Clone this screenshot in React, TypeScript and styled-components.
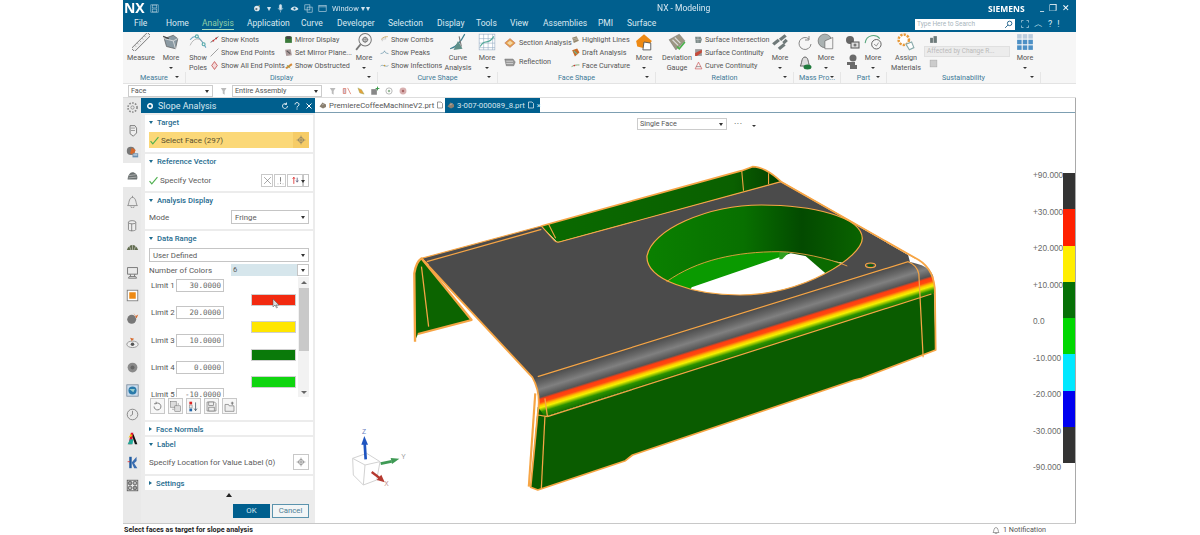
import React from 'react';
import styled, { createGlobalStyle } from 'styled-components';

const Global = createGlobalStyle`
  html, body { margin: 0; padding: 0; background: #fff; }
  body { width: 1200px; height: 535px; overflow: hidden; font-family: Roboto, "Noto Sans", sans-serif; }
  * { box-sizing: border-box; }
`;

const BLUE = '#005f8e';

const Shell = styled.div`
  width: 953px; height: 535px; margin-left: 123px; display: flex; flex-direction: column;
  background: #fff; filter: blur(0.3px); color: #555;
`;
const TitleBar = styled.div`
  height: 16px; background: ${BLUE}; display: flex; align-items: center; color: #fff; position: relative; padding-left: 1px;
`;
const Logo = styled.span`font: 700 14px/16px "Open Sans", sans-serif; width: 26px; letter-spacing: -0.2px;`;
const Quick = styled.div`display: flex; align-items: center; gap: 5px; width: 498px; padding-left: 94px; font-size: 7.5px; color: #cfe3ee;`;
const AppTitle = styled.span`font-size: 8.5px; color: #d7e8f1; width: 331px;`;
const Brand = styled.span`font: 700 8.5px "Open Sans", sans-serif; letter-spacing: 0; width: 52px;`;
const WinControls = styled.div`display: flex; gap: 5px; align-items: center; font-size: 9px; color: #fff;`;

const MenuBar = styled.div`
  height: 16px; background: ${BLUE}; display: flex; align-items: center; padding-left: 11px; color: #dbe9f1; font-size: 8.5px;
`;
const MenuItem = styled.span<{ $active?: boolean; $w: number }>`
  width: ${p => p.$w}px; flex: none; height: 16px; line-height: 15px;
  span { display: inline-block; height: 14px; ${p => p.$active ? 'color:#8fd0a8; border-bottom: 1px solid #a8dcc0;' : ''} }
`;
const Search = styled.div`
  margin-left: 250px; width: 100px; height: 11px; background: #fff; color: #a9b6bd; font-size: 6.5px; line-height: 11px; padding: 0 2px;
  display: flex; justify-content: space-between; align-items: center;
`;
const HelpIcons = styled.div`display: flex; gap: 5px; margin-left: 6px; align-items: center; color: #d9ecf5; font-size: 9px;`;

const Ribbon = styled.div`height: 52px; background: #f6f6f6; display: flex; font-size: 7.2px; border-bottom: 1px solid #e3e3e3;`;
const Group = styled.div<{ $w: number }>`width: ${p => p.$w}px; flex: none; display: flex; flex-direction: column;`;
const GroupBody = styled.div`height: 40px; display: flex; padding-top: 1px;`;
const GroupLabel = styled.div`
  height: 11px; line-height: 12px; display: flex; justify-content: center; color: #3e7a97; font-size: 7.2px; position: relative;
  border-right: 1px solid #e6e6e6;
  i { position: absolute; right: 6px; top: 4px; border: 2px solid transparent; border-top: 2.5px solid #333; }
`;
const Large = styled.div<{ $w: number; $ml?: number }>`
  width: ${p => p.$w}px; margin-left: ${p => p.$ml ?? 0}px; flex: none; display: flex; flex-direction: column; align-items: center;
  text-align: center; line-height: 10px;
  svg { height: 18px; width: 18px; flex: none; margin-bottom: 2px; }
`;
const Caret = styled.i`display: block; width: 0; height: 0; margin: 4px auto 0; border: 2px solid transparent; border-top: 2.5px solid #333;`;
const Column = styled.div<{ $w: number; $ml?: number }>`
  width: ${p => p.$w}px; margin-left: ${p => p.$ml ?? 0}px; flex: none; display: flex; flex-direction: column; gap: 0;
`;
const Row = styled.div`
  height: 13px; display: flex; align-items: center; gap: 2px; white-space: nowrap;
  svg { width: 9px; height: 9px; flex: none; }
`;
const BigRow = styled(Row)`height: 19px; svg { width: 14px; height: 12px; }`;
const Stack = styled.div<{ $w: number; $ml?: number }>`
  width: ${p => p.$w}px; margin-left: ${p => p.$ml ?? 0}px; flex: none; display: flex; flex-direction: column; align-items: center; gap: 3px; padding-top: 2px;
  svg { width: 16px; height: 16px; }
`;
const Disabled = styled.div`
  width: 86px; height: 11px; background: #ececec; border: 1px solid #e0e0e0; color: #bbb; font-size: 6.5px; line-height: 9px; padding-left: 2px; white-space: nowrap; margin-left: -5px;
`;

const SelectBar = styled.div`
  height: 14px; background: #fff; display: flex; align-items: center; padding-left: 5px; border-bottom: 1px solid #ddd; gap: 0; font-size: 7.2px;
`;
const SmallSelect = styled.div<{ $w: number; $ml?: number }>`
  width: ${p => p.$w}px; margin-left: ${p => p.$ml ?? 0}px; height: 12px; background: #fff; border: 1px solid #ccc; color: #555; line-height: 10px; padding-left: 2px; position: relative; flex: none;
  &::after { content: ""; position: absolute; right: 3px; top: 4px; border: 2.5px solid transparent; border-top: 3px solid #333; }
`;
const BarIcons = styled.div`display: flex; gap: 4px; margin-left: 6px; align-items: center; svg { width: 10px; height: 10px; }`;

const Workspace = styled.div`flex: 1; display: flex; min-height: 0;`;
const Resource = styled.div`
  width: 18px; flex: none; background: #e9e9e9; display: flex; flex-direction: column; align-items: center;
`;
const ResItem = styled.div<{ $h: number; $active?: boolean; $mb?: number }>`
  height: ${p => p.$h}px; margin-bottom: ${p => p.$mb ?? 0}px; width: 18px; flex: none; display: flex; align-items: center; justify-content: center;
  background: ${p => p.$active ? '#fff' : 'transparent'};
  svg { width: 13px; height: 13px; }
`;
const Dialog = styled.div`width: 174px; flex: none; background: #ececec; display: flex; flex-direction: column;`;
const DialogTitle = styled.div`
  height: 15px; background: ${BLUE}; color: #fff; font-size: 9px; display: flex; align-items: center; padding: 1px 2px 0 5px; gap: 4px;
  b { font-weight: 400; flex: 1; color: #d8e8f1; }
  svg { width: 8px; height: 8px; }
`;
const Sections = styled.div`flex: 1; display: flex; flex-direction: column; padding: 2px 2px 0 4px; gap: 2px;`;
const Section = styled.div<{ $h: number }>`height: ${p => p.$h}px; background: #fff; padding: 0 4px; flex: none; overflow: hidden;`;
const Head = styled.div`
  height: 14px; display: flex; align-items: center; color: #1f6c8f; font-size: 7.7px; gap: 4px; font-weight: 500;
`;
const Tri = styled.i<{ $open?: boolean }>`
  width: 0; height: 0; border: 2px solid transparent;
  ${p => p.$open ? 'border-top: 3px solid #1f6c8f; border-bottom: 0; ' : 'border-left: 3px solid #1f6c8f; border-right: 0;'}
`;
const YellowRow = styled.div`
  margin-top: 3px; height: 16px; background: #fbd878; display: flex; align-items: center; color: #5a5030; font-size: 8px; padding-left: 1px; gap: 2px;
`;
const Cross = styled.div<{ $dark?: boolean }>`
  width: 16px; height: 16px; display: flex; align-items: center; justify-content: center; flex: none;
  background: ${p => p.$dark ? '#f6cc66' : '#fff'}; border: ${p => p.$dark ? '0' : '1px solid #c8c8c8'};
  svg { width: 10px; height: 10px; }
`;
const FormRow = styled.div<{ $mt?: number }>`
  margin-top: ${p => p.$mt ?? 0}px; display: flex; align-items: center; font-size: 8px; color: #5b5b5b;
`;
const Grow = styled.span`flex: 1; display: flex; align-items: center; gap: 2px; white-space: nowrap;`;
const VecBtn = styled.div<{ $w?: number }>`
  width: ${p => p.$w ?? 12}px; height: 13px; border: 1px solid #c9c9c9; background: #fff; display: flex; align-items: center; justify-content: center; margin-left: 1px; flex: none;
  svg { width: 9px; height: 9px; }
`;
const Sel = styled.div<{ $w?: number; $h?: number; $mt?: number }>`
  width: ${p => p.$w ? p.$w + 'px' : '100%'}; height: ${p => p.$h ?? 14}px; margin-top: ${p => p.$mt ?? 0}px; border: 1px solid #c5c5c5; background: #fff; font-size: 7.8px; color: #5b5b5b; padding-left: 3px;
  display: flex; align-items: center; position: relative; flex: none;
  &::after { content: ""; position: absolute; right: 3px; top: 50%; margin-top: -1px; border: 2.5px solid transparent; border-top: 3px solid #333; }
`;
const ColorInput = styled.div`
  width: 66px; height: 12px; background: #d6e6ec; font-size: 7.5px; padding-left: 2px; line-height: 12px; flex: none;
`;
const List = styled.div`
  margin-top: 1px; height: 120px; overflow: hidden; display: flex; position: relative; padding-top: 2px; font-size: 7.8px; background: #fff;
`;
const LimitCol = styled.div`width: 75px; flex: none; display: flex; flex-direction: column; gap: 14.3px;`;
const LimitRow = styled.div`height: 13px; display: flex; align-items: center; justify-content: space-between; padding-left: 2px; flex: none;`;
const LimitInput = styled.div`
  width: 48px; height: 13px; border: 1px solid #c5c5c5; text-align: right; padding-right: 2px; font: 7.5px/11px "DejaVu Sans Mono", monospace; color: #666;
`;
const SwatchCol = styled.div`margin-left: 27px; width: 45px; flex: none; padding-top: 15px; display: flex; flex-direction: column; gap: 15.3px;`;
const Swatch = styled.div<{ $c: string }>`height: 12px; background: ${p => p.$c}; border: 1px solid #cfcfcf; flex: none; position: relative;`;
const Pointer = styled.svg`position: absolute; left: 20px; top: 4px; width: 7px; height: 10px;`;
const Scroll = styled.div`
  position: absolute; right: 0; top: 0; bottom: 0; width: 11px; background: #f2f2f2; display: flex; flex-direction: column; align-items: center;
  i { width: 0; height: 0; border: 3px solid transparent; border-bottom: 3px solid #666; border-top: 0; margin: 4px 0 4px; }
  b { width: 10px; height: 63px; background: #c9c9c9; flex: none; }
  u { width: 0; height: 0; border: 3px solid transparent; border-top: 3px solid #666; border-bottom: 0; margin-top: auto; margin-bottom: 3px; }
`;
const ToolStrip = styled.div`margin-top: 1px; display: flex; gap: 3px; padding-left: 1px;`;
const ToolBtn = styled.div`
  width: 15px; height: 16px; border: 1px solid #c8c8c8; background: #f7f7f7; display: flex; align-items: center; justify-content: center;
  svg { width: 11px; height: 11px; }
`;
const Grip = styled.div`height: 5px; display: flex; justify-content: center; align-items: center; i { border: 3px solid transparent; border-bottom: 4px solid #222; border-top: 0; }`;
const Footer = styled.div`display: flex; justify-content: flex-end; gap: 2px; padding: 5px 4px 0 0;`;
const Btn = styled.div<{ $primary?: boolean }>`
  width: 37px; height: 14px; font-size: 7.8px; line-height: 12px; text-align: center;
  background: ${p => p.$primary ? BLUE : '#f2f5f6'}; color: ${p => p.$primary ? '#d6e6ef' : '#4f7e95'}; border: 1px solid ${p => p.$primary ? BLUE : '#5b93ad'};
`;

const View = styled.div`flex: 1; display: flex; flex-direction: column; border-right: 1px solid #a9a9a9; min-width: 0;`;
const Tabs = styled.div`height: 15px; display: flex; align-items: center; padding-left: 2px; font-size: 7.8px; border-bottom: 1px solid #7d9fb2; flex: none;`;
const DocTab = styled.div<{ $on?: boolean; $w: number }>`
  width: ${p => p.$w}px; height: 15px; display: flex; align-items: center; gap: 2px; padding-left: 2px; white-space: nowrap; margin-right: 3px;
  background: ${p => p.$on ? BLUE : 'transparent'}; color: ${p => p.$on ? '#d4e6ef' : '#555'};
  svg { width: 8px; height: 8px; flex: none; }
`;
const Canvas = styled.div`flex: 1; position: relative; background: #fff;`;
const ViewSelect = styled.div`
  position: absolute; left: 322px; top: 5px; display: flex; align-items: center; gap: 7px; font-size: 7.2px; color: #444;
`;
const ViewExtra = styled.span`font-size: 9px; line-height: 8px; letter-spacing: 0.5px;`;
const ViewCaret = styled.i`border: 2px solid transparent; border-top: 2.5px solid #333; margin-top: 5px; margin-left: 2px;`;
const ModelSvg = styled.svg`position: absolute; left: 85px; top: 37px; width: 560px; height: 350px;`;
const Triad = styled.svg`position: absolute; left: 25px; top: 307px; width: 100px; height: 70px;`;
const Legend = styled.div`
  position: absolute; left: 718px; top: 57px; height: 302px; width: 42px; display: flex; flex-direction: column; justify-content: space-between;
  font: 8.3px/10px "Liberation Sans", sans-serif; color: #6a6a6a;
`;
const Bar = styled.div`position: absolute; right: 0; top: 60px; width: 12px; height: 290px; display: flex; flex-direction: column;`;
const Seg = styled.div<{ $c: string }>`flex: 1; background: ${p => p.$c};`;

const Status = styled.div`
  height: 12px; flex: none; border-top: 1px solid #c8c8c8; display: flex; align-items: center; justify-content: space-between; padding: 0 30px 0 1px; font-size: 7.2px;
  b { color: #222; font-weight: 700; }
  span { display: flex; align-items: center; gap: 3px; color: #555; }
  svg { width: 8px; height: 8px; }
`;

type P = { name: string };
const Ic = ({ name }: P) => {
  const m: Record<string, React.ReactNode> = {
    ruler: <g transform="rotate(-45 8 8)"><rect x="-2" y="6" width="20" height="4" fill="#eee" stroke="#777" strokeWidth=".8" /><path d="M2 6v2M5 6v2M8 6v2M11 6v2M14 6v2" stroke="#888" strokeWidth=".5" /></g>,
    cube: <g><path d="M2 5l8-3 4 3-2 9-8-2z" fill="#8b9aa3" stroke="#555" strokeWidth=".6" /><path d="M2 5l8 2 4-2M10 7l2 7" stroke="#e8e8e8" strokeWidth=".7" fill="none" /><path d="M1 3l5 2" stroke="#444" strokeWidth="1" /></g>,
    poles: <g fill="none"><path d="M1 6C5 1 9 2 15 13" stroke="#6aa7c5" strokeWidth="1" /><path d="M1 11C4 4 9 4 12 8" stroke="#aaa" strokeWidth=".7" /><circle cx="7" cy="3" r="1.3" fill="#f4f4f4" stroke="#5aa" /><circle cx="13" cy="10" r="1.3" fill="#f4f4f4" stroke="#5aa" /></g>,
    knots: <g><path d="M1 13C5 11 9 7 15 3" stroke="#444" strokeWidth="1.3" fill="none" /><circle cx="6" cy="10" r="1.6" fill="#c33" /><circle cx="11" cy="6" r="1.6" fill="#c33" /></g>,
    ends: <path d="M1 15L15 1" stroke="#777" strokeWidth="1.2" />,
    allEnds: <path d="M8 1l5 7-5 7-5-7z" fill="#f3d8d8" stroke="#b33" strokeWidth="1.2" />,
    mirror: <g><path d="M2 3h12v11H2z" fill="#3a7a3a" /><path d="M4 2h8v5H4z" fill="#444" /></g>,
    plane: <g><path d="M2 3l10-1 2 11-10 1z" fill="#a99" /><path d="M5 5l6 5" stroke="#555" strokeWidth="2" /></g>,
    obstructed: <g><path d="M2 12L13 4l2 3L5 14z" fill="#d48a3a" /><path d="M5 7l6 6" stroke="#7a5" strokeWidth="1.5" /></g>,
    lens: <g fill="none" stroke="#777"><circle cx="9" cy="6" r="5.5" strokeWidth=".9" /><circle cx="9" cy="6" r="2" strokeWidth=".9" /><path d="M9 3v6M6 6h6" strokeWidth=".6" /><path d="M5 10l-4 5" strokeWidth="1.6" /></g>,
    combs: <g stroke="#c99a3a" strokeWidth="1.2" fill="none"><path d="M2 8c4-5 8-5 12-5" /><path d="M4 6v5M7 4v5M10 3v5" stroke="#888" strokeWidth=".7" /></g>,
    peaks: <g fill="none"><path d="M1 10C5 9 7 9 8 5c1 4 3 4 7 5" stroke="#5a8aa0" strokeWidth="1.1" /></g>,
    inflect: <g><path d="M1 9c4-4 9 3 14-1" stroke="#5a8aa0" strokeWidth="1.1" fill="none" /><circle cx="8" cy="8" r="1.5" fill="#c93" /></g>,
    curveAn: <g fill="none"><path d="M1 14C5 13 10 9 14 1" stroke="#3d7f8f" strokeWidth="1" /><path d="M4 15l4-8 4 7z" fill="#5f8f88" /><path d="M9 3l2 9" stroke="#777" /></g>,
    grid: <g stroke="#8fa8c0" strokeWidth=".5" fill="#fff"><rect x="1" y="1" width="14" height="14" /><path d="M1 5h14M1 9h14M1 13h14M5 1v14M9 1v14M13 1v14" /><path d="M2 12C6 4 9 12 14 3" stroke="#5a9" strokeWidth="1" fill="none" /></g>,
    section: <g><path d="M1 8l7-6 7 6-7 6z" fill="#e4a04c" stroke="#a55" strokeWidth=".6" /><path d="M4 8l4-3 4 3-4 3z" fill="#f3d7a8" /></g>,
    reflection: <g><path d="M1 4h11l3 4-2 5H3z" fill="#999" stroke="#555" strokeWidth=".5" /><path d="M3 7h9M3 10h9" stroke="#eee" strokeWidth=".8" /></g>,
    highlight: <g><path d="M2 5l8-3 4 8-9 4z" fill="#96886e" /><path d="M3 7l9-2M4 10l9-3" stroke="#eee" strokeWidth=".7" /></g>,
    draft: <g><path d="M2 4l9-3 4 7-8 7z" fill="#c96a28" /><path d="M5 5l6 6" stroke="#6b9" strokeWidth="2" /></g>,
    curvature: <g><path d="M1 10C6 7 10 7 15 7" stroke="#6a9a5a" strokeWidth="1.4" fill="none" /><circle cx="6" cy="8" r="1.5" fill="#c33" /></g>,
    moreOrange: <g><path d="M1 7L8 1l7 6-5 7-8-2z" fill="#ee8a14" /><path d="M8 8l6 1v6H7z" fill="#fff" stroke="#555" strokeWidth=".8" /></g>,
    gauge: <g><path d="M1 6l9-5 5 6-8 8z" fill="#9c9683" stroke="#666" strokeWidth=".4" /><path d="M4 6l5 5M6 4l5 5" stroke="#ddd" strokeWidth="1" /><path d="M8 12l2 2 5-6" stroke="#4bb14b" strokeWidth="1.5" fill="none" /></g>,
    intersect: <g><path d="M2 3h10l2 5-2 6H3z" fill="#7e8c8a" /><path d="M3 8h10M7 3v11" stroke="#ddd" strokeWidth=".7" /></g>,
    continuity: <g><path d="M2 2h12v12H2z" fill="#9a9a9a" /><path d="M2 9L14 3v5L5 14H2z" fill="#c74a3a" /></g>,
    curveCont: <g><path d="M2 14h12L8 2z" fill="none" stroke="#c55" strokeWidth="1.2" /><path d="M4 10h8" stroke="#555" strokeWidth="1" /></g>,
    moreStack: <g fill="#707a7a"><path d="M1 9l5-4 2 2-5 4zM6 13l5-4 2 2-5 4zM7 5l5-4 2 2-5 4zM10 8l3-3 2 2-3 3z" /></g>,
    rotate: <path d="M12 4a6 6 0 1 0 2 5M12 1v4H8" fill="none" stroke="#888" strokeWidth="1" />,
    bell: <g><path d="M3 12c2-1 1-9 5-9s3 8 5 9z" fill="#ddd" stroke="#555" strokeWidth=".9" /><ellipse cx="10.5" cy="13" rx="4" ry="2.5" fill="#1f7a3c" /></g>,
    shape: <g><circle cx="7" cy="7" r="6" fill="#aab2b2" stroke="#666" strokeWidth=".6" /><path d="M7 7l7-3v10H7z" fill="#f4f4f4" stroke="#666" strokeWidth=".6" /></g>,
    parts: <g><circle cx="6" cy="5" r="4" fill="#666" /><rect x="7" y="7" width="8" height="6" fill="#ddd" stroke="#555" /><circle cx="11" cy="10" r="1.5" fill="#777" /></g>,
    parts2: <g fill="#6a6a6a"><circle cx="9" cy="4" r="3.5" /><rect x="3" y="8" width="8" height="3" /><rect x="6" y="11" width="7" height="4" /></g>,
    partArc: <g fill="none"><path d="M1 9C2 1 11 1 14 5" stroke="#57a57c" strokeWidth=".9" /><circle cx="11" cy="10" r="4.2" stroke="#555" strokeWidth=".8" /><path d="M9 10l2 1.5 2-3" stroke="#777" strokeWidth=".7" /></g>,
    material: <g><circle cx="6" cy="6" r="4.6" fill="#fff" stroke="#e89a3a" strokeWidth="2.2" strokeDasharray="2 1" /><path d="M8 10l5-2 2 5-4 2z" fill="#fff" stroke="#8aa" /></g>,
    tiny: <g fill="#6d7a7a"><rect x="2" y="5" width="5" height="9" /><rect x="8" y="2" width="6" height="12" /></g>,
    tinyBox: <rect x="2" y="2" width="12" height="12" fill="#ccc" stroke="#aaa" />,
    blocks: <g fill="#4d90c5"><rect x="1" y="1" width="4" height="4" fill="#bcd" /><rect x="6" y="1" width="4" height="4" fill="#bcd" /><rect x="11" y="1" width="4" height="4" fill="#bcd" /><rect x="1" y="6" width="4" height="4" /><rect x="6" y="6" width="4" height="4" /><rect x="11" y="6" width="4" height="4" /><rect x="1" y="11" width="4" height="4" /><rect x="6" y="11" width="4" height="4" /><rect x="11" y="11" width="4" height="4" /></g>,
    sel1: <g><path d="M3 3h9l-3 5v6l-3-2V8z" fill="#bbb" /></g>,
    sel2: <g><path d="M2 4h4v8H2zM9 3l5 10" stroke="#d76" strokeWidth="1.2" fill="#ccd" /></g>,
    sel3: <g><path d="M3 3l6 3 4 7-7-2z" fill="#e5a23a" stroke="#8a6" strokeWidth=".6" /></g>,
    sel4: <g><path d="M2 5h9v9H2z" fill="#888" /><path d="M12 1v6M9 4h6" stroke="#3a9c4a" strokeWidth="1.5" /></g>,
    sel5: <g><circle cx="8" cy="8" r="5" fill="none" stroke="#aaa" strokeWidth="1.3" /><circle cx="8" cy="8" r="2" fill="#9b9" /></g>,
    sel6: <g><circle cx="8" cy="8" r="5.5" fill="#d8b0b0" /><circle cx="8" cy="8" r="2" fill="#a66" /></g>,
    gear: <g fill="none" stroke="#8a8a8a"><circle cx="8" cy="8" r="2" /><circle cx="8" cy="8" r="5.6" strokeWidth="2" strokeDasharray="2 1.6" /></g>,
    parts3: <g><path d="M5 2h6l2 3v6l-4 4-4-3z" fill="#eee" stroke="#666" /><path d="M6 5h5M6 8h5" stroke="#888" /></g>,
    assy: <g><circle cx="6" cy="6" r="5" fill="#777" /><path d="M7 2l5 3-3 6-4-2z" fill="#d7692b" /><path d="M8 9h7v5H8z" fill="#6a90b0" /><path d="M9 11h5" stroke="#fff" /></g>,
    active: <g><path d="M2 13c0-5 3-9 6-9s6 3 6 6-1 3-1 3z" fill="#6a7070" /><path d="M4 8l8-1M3 11l10-1" stroke="#ddd" strokeWidth=".7" /></g>,
    bellOut: <path d="M2 13c2-1 1-10 6-10s4 9 6 10zM8 1v2M6 14a2 2 0 0 0 4 0" fill="none" stroke="#777" strokeWidth=".9" />,
    cyl: <g fill="#eee" stroke="#777"><path d="M3 4v9c0 2 9 2 9 0V4" /><ellipse cx="7.5" cy="4" rx="4.5" ry="2" /><path d="M7 6v9" /></g>,
    eye: <g><path d="M1 11C4 3 12 3 15 11z" fill="#606b4e" /><path d="M8 4v7M4 6l2 5M12 6l-2 5" stroke="#ddd" strokeWidth=".7" /></g>,
    monitor: <g fill="none" stroke="#666"><rect x="2" y="2" width="12" height="8" /><path d="M4 13h8l1 2H3z" /><path d="M5 10l1 3M11 10l-1 3" /></g>,
    orange: <g><rect x="1.5" y="1.5" width="13" height="13" fill="#fff" stroke="#777" /><rect x="4" y="4" width="8" height="8" fill="#ee8a14" /></g>,
    sphereO: <g><circle cx="7" cy="9" r="5.5" fill="#777" /><path d="M9 1l3 4 3-2-2 5" fill="#d7692b" /></g>,
    disk: <g><ellipse cx="8" cy="9" rx="7" ry="4" fill="#eee" stroke="#888" /><circle cx="8" cy="9" r="2.2" fill="#555" /><path d="M5 1l2 4 3-3" fill="#d7692b" /></g>,
    ball: <g><circle cx="8" cy="8" r="6" fill="#8a8a8a" /><circle cx="8" cy="8" r="2.5" fill="#666" /></g>,
    globe: <g><rect x="1" y="1" width="14" height="14" fill="#cde" stroke="#789" /><circle cx="8" cy="8" r="5" fill="#2a7aaa" /><path d="M4 6h7l-2 4z" fill="#9cc" /></g>,
    clock: <g fill="none" stroke="#777"><circle cx="8" cy="8" r="6.5" /><path d="M8 3.5V8l-3 2" /></g>,
    fringe: <g><path d="M3 15L6 1h3L7 15z" fill="#d13" /><path d="M2 15l3-6h4l-1 6z" fill="#2a9" /><path d="M3 7l3-5 2 3z" fill="#f1c40f" /><path d="M9 2l5 13h-3L8 6z" fill="#111" /></g>,
    kinks: <g><path d="M4 1h3v14H4z" fill="#1f5ba0" /><path d="M7 8l6-7v5l-3 3 4 6H10z" fill="#3a6db0" /><path d="M2 7h3" stroke="#d33" /></g>,
    web: <g fill="none" stroke="#555"><rect x="1.5" y="1.5" width="13" height="13" /><circle cx="5" cy="5" r="2.3" fill="#999" /><circle cx="11" cy="5" r="2.3" fill="#bbb" /><circle cx="5" cy="11" r="2.3" fill="#bbb" /><circle cx="11" cy="11" r="2.3" fill="#999" /></g>,
    undo: <path d="M3 8a5 5 0 1 0 3-4.6M6 1v3H3" fill="none" stroke="#555" />,
    copy: <g fill="#ddd" stroke="#666" strokeWidth=".7"><rect x="1" y="1" width="8" height="8" /><rect x="7" y="7" width="8" height="8" /><path d="M3 12h3M12 3v3" /></g>,
    bars: <g><rect x="2" y="1" width="4" height="4" fill="#d22" /><rect x="2" y="6" width="4" height="4" fill="#eee" stroke="#999" /><rect x="2" y="11" width="4" height="4" fill="#26a" /><path d="M11 2v12M9 11l2 3 2-3" stroke="#345" fill="none" /></g>,
    save: <g fill="#eee" stroke="#777"><path d="M1.5 1.5h11l2 2v11h-13z" /><rect x="4" y="1.5" width="7" height="5" /><rect x="4" y="9" width="8" height="5.5" /></g>,
    open: <g fill="#eee" stroke="#777"><path d="M1.5 5h5l1 2h7v8h-13z" /><path d="M12 1v5M10 3h4" stroke="#555" /></g>,
    crosshair: <g fill="none" stroke="#666" strokeWidth=".9"><circle cx="8" cy="8" r="4" /><path d="M8 1v14M1 8h14" /></g>,
    xvec: <path d="M2 2l12 12M14 2L2 14" stroke="#666" strokeWidth="1" fill="none" />,
    dots: <path d="M8 2v8M8 12v2M3 14h1M12 14h1" stroke="#666" strokeWidth="1.4" />,
    arrows: <g strokeWidth="1.4" fill="none"><path d="M5 14V3M3 5l2-3 2 3" stroke="#d22" /><path d="M11 3v7M9 8l2 3 2-3" stroke="#557" /></g>,
    gearSmall: <g fill="none" stroke="#fff"><circle cx="8" cy="8" r="4.5" strokeWidth="3" /></g>,
    refresh: <path d="M13 8a5 5 0 1 1-2-4M11 1v4H7" fill="none" stroke="#fff" strokeWidth="1.6" />,
    close: <path d="M3 3l10 10M13 3L3 13" stroke="#fff" strokeWidth="2" />,
    help: <path d="M4 5c0-5 8-5 8 0 0 3-4 3-4 6M8 13v2" fill="none" stroke="#fff" strokeWidth="2" />,
    tabPart: <g><path d="M1 11l6-8 7 4v5l-6 3z" fill="#8a7f70" /><path d="M6 8l5-3" stroke="#ddd" /></g>,
    saved: <g fill="none" stroke="#fff"><path d="M3 2h7l3 3v9H3z" strokeWidth="1.3" /></g>,
    savedDark: <g fill="none" stroke="#666"><path d="M3 2h7l3 3v9H3z" strokeWidth="1.3" /></g>,
    floppy: <g fill="none" stroke="#b6d0de"><rect x="1.5" y="1.5" width="13" height="13" /><rect x="4" y="2" width="8" height="5" /><rect x="4" y="9" width="8" height="5" /></g>,
    qa1: <g><circle cx="7" cy="8" r="5" fill="#dfe9ee" /><circle cx="6" cy="9" r="2" fill="#66747a" /><path d="M9 3l3-1v3z" fill="#e7a44b" /></g>,
    mic: <g fill="none" stroke="#d5e5ee"><rect x="6" y="1" width="4" height="9" rx="2" fill="#d5e5ee" /><path d="M4 7c0 5 8 5 8 0M8 12v3" /></g>,
    qa2: <g fill="#d8e7ef"><path d="M1 9c3-6 11-6 14 0-3 4-11 4-14 0z" /><circle cx="8" cy="8" r="2" fill={BLUE} /></g>,
    qa3: <g fill="none" stroke="#d8e7ef"><rect x="1.5" y="1.5" width="9" height="9" /><rect x="5.5" y="5.5" width="9" height="9" /></g>,
    win: <g fill="none" stroke="#d8e7ef"><rect x="1.5" y="2.5" width="13" height="11" /><path d="M1.5 5h13" /></g>,
    magnify: <g fill="none" stroke="#1a5f88" strokeWidth="1.6"><circle cx="10" cy="6" r="4" /><path d="M7 9l-5 5" /></g>,
    corners: <path d="M1 5V1h4M11 1h4v4M15 11v4h-4M5 15H1v-4" fill="none" stroke="#d9ecf5" strokeWidth="1.2" />,
    check: <path d="M1 9l4 5L15 2" fill="none" stroke="#4fb04f" strokeWidth="2" />,
    notif: <path d="M2 13c2-1 1-10 6-10s4 9 6 10zM6 14a2 2 0 0 0 4 0" fill="none" stroke="#444" />,
  };
  return <svg viewBox="0 0 16 16" aria-hidden="true">{m[name]}</svg>;
};

const QIcon = styled.span<{ $s?: number }>`display: inline-flex; flex: none; svg { width: ${p => p.$s ?? 9}px; height: ${p => p.$s ?? 9}px; }`;
const SelectLabel = styled.span`flex: 1;`;
const SaveSlot = styled.span`display: inline-flex; svg { width: 9px; height: 9px; }`;
const More = ({ icon, ml }: { icon: string; ml?: number }) => (
  <Large $w={24} $ml={ml}><Ic name={icon} />More<Caret /></Large>
);

const tool = (icon: string, label: string) => <Row key={label}><Ic name={icon} />{label}</Row>;

const menu: [string, number, boolean?][] = [
  ['File', 32], ['Home', 36], ['Analysis', 45, true], ['Application', 54], ['Curve', 36], ['Developer', 51], ['Selection', 49],
  ['Display', 39], ['Tools', 34], ['View', 33], ['Assemblies', 55], ['PMI', 29], ['Surface', 38],
];
const resIcons: [string, number, boolean?][] = [
  ['parts3', 22], ['assy', 22], ['active', 24, true], ['bellOut', 28], ['cyl', 20], ['eye', 24], ['monitor', 26], ['orange', 20],
  ['sphereO', 26], ['disk', 24], ['ball', 24], ['globe', 22], ['clock', 26], ['fringe', 22], ['kinks', 26], ['web', 20],
];
const limits = ['30.0000', '20.0000', '10.0000', '0.0000', '-10.0000'];
const swatches = ['#f22a10', '#ffe600', '#0a7a0a', '#10d510'];
const scale = ['+90.000', '+30.000', '+20.000', '+10.000', '0.0', '-10.000', '-20.000', '-30.000', '-90.000'];
const segs = ['#333333', '#ff2000', '#ffee00', '#067006', '#00d800', '#00e8ff', '#0000f0', '#333333'];

const Model = () => (
  <ModelSvg viewBox="0 0 1565 1050" preserveAspectRatio="none" aria-hidden="true">
    <defs>
      <linearGradient id="bend" gradientUnits="userSpaceOnUse" x1="900" y1="508" x2="940" y2="628">
        <stop offset="0" stopColor="#4a4a4a" /><stop offset=".18" stopColor="#686868" /><stop offset=".3" stopColor="#808080" />
        <stop offset=".48" stopColor="#555" /><stop offset=".53" stopColor="#ff3c10" /><stop offset=".6" stopColor="#ff4a10" />
        <stop offset=".67" stopColor="#ffc800" /><stop offset=".72" stopColor="#f4f000" /><stop offset=".82" stopColor="#2a9000" /><stop offset="1" stopColor="#0a5c00" />
      </linearGradient>
      <linearGradient id="wall" x1="0" x2="1" y1="0" y2="0">
        <stop offset="0" stopColor="#0a8000" /><stop offset=".45" stopColor="#087000" /><stop offset=".72" stopColor="#034a00" /><stop offset="1" stopColor="#0a6400" />
      </linearGradient>
      <linearGradient id="slot" x1="0" x2="1" y1="0" y2="0">
        <stop offset="0" stopColor="#0a6a00" /><stop offset=".8" stopColor="#0a6000" /><stop offset="1" stopColor="#034000" />
      </linearGradient>
      <clipPath id="hole"><path d="M690 320C700 240 860 165 1010 165C1150 165 1290 200 1292 265C1292 320 1130 435 950 435C820 435 690 390 690 320Z" /></clipPath>
    </defs>
    <path d="M42 572L40 370Q45 335 60 325L200 510L50 552Z" fill="#0c6400" />
    <path d="M395 228L955 62L985 50Q1020 50 1065 95L440 277Z" fill="url(#slot)" />
    <path d="M60 325L395 228L430 270Q435 278 445 276L1065 95L1420 315L1425 335L385 680L370 682Z" fill="#4b4b4b" />
    <path d="M370 682L1420 335Q1480 345 1490 378L1495 430L405 800L385 790Q395 730 370 682Z" fill="url(#bend)" />
    <path d="M405 800L1492 430L1497 600L1290 685L1270 690L650 915L630 932L385 1020L365 1012L385 770Z" fill="#0a5c00" />
    <path d="M690 320C700 240 860 165 1010 165C1150 165 1290 200 1292 265C1292 320 1130 435 950 435C820 435 690 390 690 320Z" fill="url(#wall)" />
    <g clipPath="url(#hole)">
      <path d="M745 395C830 330 940 305 1060 305L1092 312L815 420Z" fill="#0a9a00" />
      <path d="M1092 310L1300 350L1200 450L800 450L815 412Z" fill="#fff" />
      <path d="M1130 315C1180 322 1225 335 1250 348L1198 378Z" fill="#0b6a00" />
      <path d="M1060 306h28l-20 22h-8z" fill="#2f9f1f" />
    </g>
    <g fill="none" stroke="#f6a545" strokeWidth="3.5">
      <path d="M690 320C700 240 860 165 1010 165C1150 165 1290 200 1292 265C1292 320 1130 435 950 435C820 435 690 390 690 320Z" />
      <path d="M745 395C830 330 940 305 1060 305C1110 305 1200 325 1250 348" strokeWidth="2.5" />
      <path d="M395 228L430 270Q435 278 445 276L1065 95" />
      <path d="M415 222L435 265M955 62L960 122M1030 70L1030 103" strokeWidth="3" />
      <path d="M1065 95L1440 325" />
      <path d="M60 325L395 228M75 335L395 238" />
      <path d="M385 680L1420 335Q1445 345 1450 372" />
      <path d="M412 800L1485 432M405 745L412 800M1450 372L1462 622M385 795L412 800" />
      <path d="M405 800L395 1015" />
      <path d="M80 345L60 325M60 350L80 530" />
      <ellipse cx="1315" cy="346" rx="14" ry="7" />
    </g>
    <g fill="none" stroke="#f6a545" strokeLinejoin="round">
      <path d="M42 575L40 370Q45 335 60 325L200 510L50 552" strokeWidth="6.5" />
      <path d="M60 325L370 682Q395 730 385 790L365 1012L385 1020L630 932L650 915L1270 690L1290 685L1497 600L1495 430Q1495 360 1450 330L1065 95Q1020 50 985 50L955 62L395 228" strokeWidth="5" />
      <path d="M378 730L360 1010" strokeWidth="6" />
    </g>
    <ellipse cx="1315" cy="346" rx="8" ry="3.5" fill="#0a6000" />
  </ModelSvg>
);

const Axis = () => (
  <Triad viewBox="0 0 300 210" aria-hidden="true">
    <g fill="none" stroke="#d2d2d2" strokeWidth="3">
      <path d="M38 115L80 100L120 125L110 180L70 195L40 165Z" />
      <path d="M38 115L75 135L120 125M75 135L70 195" />
    </g>
    <path d="M77 118L74 70" stroke="#1f55c0" strokeWidth="8" />
    <path d="M64 74L73 48L84 74Z" fill="#1f55c0" />
    <path d="M122 131L155 124" stroke="#3f9a55" strokeWidth="8" />
    <path d="M152 114L178 116L156 132Z" fill="#3f9a55" />
    <path d="M95 156L120 175" stroke="#b5392f" strokeWidth="7" />
    <path d="M124 164L134 187L110 180Z" fill="#b5392f" />
    <g fontFamily="Liberation Sans, sans-serif" fontSize="20">
      <text x="66" y="42" fill="#6a7fc0">Z</text>
      <text x="184" y="116" fill="#999">Y</text>
      <text x="133" y="198" fill="#b88">X</text>
    </g>
  </Triad>
);

export default function App() {
  return (
    <>
      <Global />
      <Shell>
        <TitleBar>
          <Logo>NX</Logo>
          <SaveSlot><Ic name="floppy" /></SaveSlot>
          <Quick>
            <QIcon><Ic name="qa1" /></QIcon><span>▾</span>
            <QIcon><Ic name="mic" /></QIcon>
            <QIcon><Ic name="qa2" /></QIcon>
            <QIcon><Ic name="qa3" /></QIcon>
            <QIcon><Ic name="win" /></QIcon>
            <span>Window ▾ ▾</span>
          </Quick>
          <AppTitle>NX - Modeling</AppTitle>
          <Brand>SIEMENS</Brand>
          <WinControls><span>_</span><span>❐</span><span>✕</span></WinControls>
        </TitleBar>
        <MenuBar>
          {menu.map(([t, w, a]) => <MenuItem key={t} $w={w} $active={a}><span>{t}</span></MenuItem>)}
          <Search>Type Here to Search<QIcon><Ic name="magnify" /></QIcon></Search>
          <HelpIcons>
            <QIcon $s={8}><Ic name="corners" /></QIcon><span>︿</span><span>?</span><span>!</span>
          </HelpIcons>
        </MenuBar>
        <Ribbon>
          <Group $w={63}>
            <GroupBody>
              <Large $w={36}><Ic name="ruler" />Measure</Large>
              <Large $w={24}><Ic name="cube" />More<Caret /></Large>
            </GroupBody>
            <GroupLabel>Measure<i /></GroupLabel>
          </Group>
          <Group $w={192}>
            <GroupBody>
              <Large $w={24}><Ic name="poles" />Show<br />Poles</Large>
              <Column $w={74}>
                {tool('knots', 'Show Knots')}{tool('ends', 'Show End Points')}{tool('allEnds', 'Show All End Points')}
              </Column>
              <Column $w={64}>
                {tool('mirror', 'Mirror Display')}{tool('plane', 'Set Mirror Plane...')}{tool('obstructed', 'Show Obstructed')}
              </Column>
              <More icon="lens" ml={4} />
            </GroupBody>
            <GroupLabel>Display<i /></GroupLabel>
          </Group>
          <Group $w={120}>
            <GroupBody>
              <Column $w={62} $ml={2}>
                {tool('combs', 'Show Combs')}{tool('peaks', 'Show Peaks')}{tool('inflect', 'Show Infections')}
              </Column>
              <Large $w={30} $ml={1}><Ic name="curveAn" />Curve<br />Analysis</Large>
              <More icon="grid" ml={2} />
            </GroupBody>
            <GroupLabel>Curve Shape<i /></GroupLabel>
          </Group>
          <Group $w={158}>
            <GroupBody>
              <Column $w={68} $ml={5}>
                <BigRow><Ic name="section" />Section Analysis</BigRow>
                <BigRow><Ic name="reflection" />Reflection</BigRow>
              </Column>
              <Column $w={59}>
                {tool('highlight', 'Highlight Lines')}{tool('draft', 'Draft Analysis')}{tool('curvature', 'Face Curvature')}
              </Column>
              <More icon="moreOrange" ml={2} />
            </GroupBody>
            <GroupLabel>Face Shape<i /></GroupLabel>
          </Group>
          <Group $w={138}>
            <GroupBody>
              <Large $w={30} $ml={6}><Ic name="gauge" />Deviation<br />Gauge</Large>
              <Column $w={74} $ml={2}>
                {tool('intersect', 'Surface Intersection')}{tool('continuity', 'Surface Continuity')}{tool('curveCont', 'Curve Continuity')}
              </Column>
              <More icon="moreStack" ml={0} />
            </GroupBody>
            <GroupLabel>Relation<i /></GroupLabel>
          </Group>
          <Group $w={47}>
            <GroupBody>
              <Stack $w={21}><Ic name="rotate" /><Ic name="bell" /></Stack>
              <More icon="shape" ml={-1} />
            </GroupBody>
            <GroupLabel>Mass Pro...<i /></GroupLabel>
          </Group>
          <Group $w={46}>
            <GroupBody>
              <Stack $w={21}><Ic name="parts" /><Ic name="parts2" /></Stack>
              <More icon="partArc" ml={-1} />
            </GroupBody>
            <GroupLabel>Part<i /></GroupLabel>
          </Group>
          <Group $w={154}>
            <GroupBody>
              <Large $w={34} $ml={2}><Ic name="material" />Assign<br />Materials</Large>
              <Column $w={83} $ml={6}>
                <Row><Ic name="tiny" /></Row>
                <Disabled>Affected by Change R...</Disabled>
                <Row><Ic name="tinyBox" /></Row>
              </Column>
              <More icon="blocks" ml={1} />
            </GroupBody>
            <GroupLabel>Sustainability<i /></GroupLabel>
          </Group>
        </Ribbon>
        <SelectBar>
          <SmallSelect $w={85}>Face</SmallSelect>
          <BarIcons><Ic name="sel1" /></BarIcons>
          <SmallSelect $w={90} $ml={3}>Entire Assembly</SmallSelect>
          <BarIcons><Ic name="sel1" /><Ic name="sel2" /><Ic name="sel3" /><Ic name="sel4" /><Ic name="sel5" /><Ic name="sel6" /></BarIcons>
        </SelectBar>
        <Workspace>
          <Resource>
            <ResItem $h={18} $mb={3}><Ic name="gear" /></ResItem>
            {resIcons.map(([n, h, a]) => <ResItem key={n} $h={h} $active={a}><Ic name={n} /></ResItem>)}
          </Resource>
          <Dialog>
            <DialogTitle>
              <Ic name="gearSmall" /><b>Slope Analysis</b>
              <Ic name="refresh" /><Ic name="help" /><Ic name="close" />
            </DialogTitle>
            <Sections>
              <Section $h={37}>
                <Head><Tri $open />Target</Head>
                <YellowRow><QIcon><Ic name="check" /></QIcon><SelectLabel>Select Face (297)</SelectLabel><Cross $dark><Ic name="crosshair" /></Cross></YellowRow>
              </Section>
              <Section $h={37}>
                <Head><Tri $open />Reference Vector</Head>
                <FormRow $mt={6}>
                  <Grow><QIcon><Ic name="check" /></QIcon>Specify Vector</Grow>
                  <VecBtn><Ic name="xvec" /></VecBtn><VecBtn><Ic name="dots" /></VecBtn><VecBtn $w={16}><Ic name="arrows" /></VecBtn><Sel $w={6} $h={13} />
                </FormRow>
              </Section>
              <Section $h={36}>
                <Head><Tri $open />Analysis Display</Head>
                <FormRow $mt={3}>
                  <Grow>Mode</Grow><Sel $w={78}>Fringe</Sel>
                </FormRow>
              </Section>
              <Section $h={189}>
                <Head><Tri $open />Data Range</Head>
                <Sel $h={14} $mt={3}>User Defined</Sel>
                <FormRow $mt={2}>
                  <Grow>Number of Colors</Grow><ColorInput>6</ColorInput><Sel $w={12} $h={12} />
                </FormRow>
                <List>
                  <LimitCol>
                    {limits.map((v, i) => <LimitRow key={v}><span>Limit {i + 1}</span><LimitInput>{v}</LimitInput></LimitRow>)}
                  </LimitCol>
                  <SwatchCol>
                    {swatches.map((c, i) => (
                      <Swatch key={c} $c={c}>
                        {i === 0 && <Pointer viewBox="0 0 7 10"><path d="M1 0v8l2-2 1.5 3 1-.5L4 6h3z" fill="#ddd" stroke="#555" strokeWidth=".5" /></Pointer>}
                      </Swatch>
                    ))}
                  </SwatchCol>
                  <Scroll><i /><b /><u /></Scroll>
                </List>
                <ToolStrip>
                  {['undo', 'copy', 'bars', 'save', 'open'].map(n => <ToolBtn key={n}><Ic name={n} /></ToolBtn>)}
                </ToolStrip>
              </Section>
              <Section $h={13}>
                <Head><Tri />Face Normals</Head>
              </Section>
              <Section $h={37}>
                <Head><Tri $open />Label</Head>
                <FormRow $mt={3}>
                  <Grow>Specify Location for Value Label (0)</Grow><Cross><Ic name="crosshair" /></Cross>
                </FormRow>
              </Section>
              <Section $h={14}>
                <Head><Tri />Settings</Head>
              </Section>
              <Grip><i /></Grip>
              <Footer><Btn $primary>OK</Btn><Btn>Cancel</Btn></Footer>
            </Sections>
          </Dialog>
          <View>
            <Tabs>
              <DocTab $w={125}><Ic name="tabPart" />PremiereCoffeeMachineV2.prt<Ic name="savedDark" /></DocTab>
              <DocTab $w={95} $on><Ic name="tabPart" />3-007-000089_8.prt<Ic name="saved" /><span>×</span></DocTab>
            </Tabs>
            <Canvas>
              <ViewSelect>
                <SmallSelect $w={90}>Single Face</SmallSelect>
                <ViewExtra>···</ViewExtra>
                <ViewCaret />
              </ViewSelect>
              <Model />
              <Axis />
              <Legend>{scale.map(s => <span key={s}>{s}</span>)}</Legend>
              <Bar>{segs.map((c, i) => <Seg key={i} $c={c} />)}</Bar>
            </Canvas>
          </View>
        </Workspace>
        <Status>
          <b>Select faces as target for slope analysis</b>
          <span><Ic name="notif" />1 Notification</span>
        </Status>
      </Shell>
    </>
  );
}
